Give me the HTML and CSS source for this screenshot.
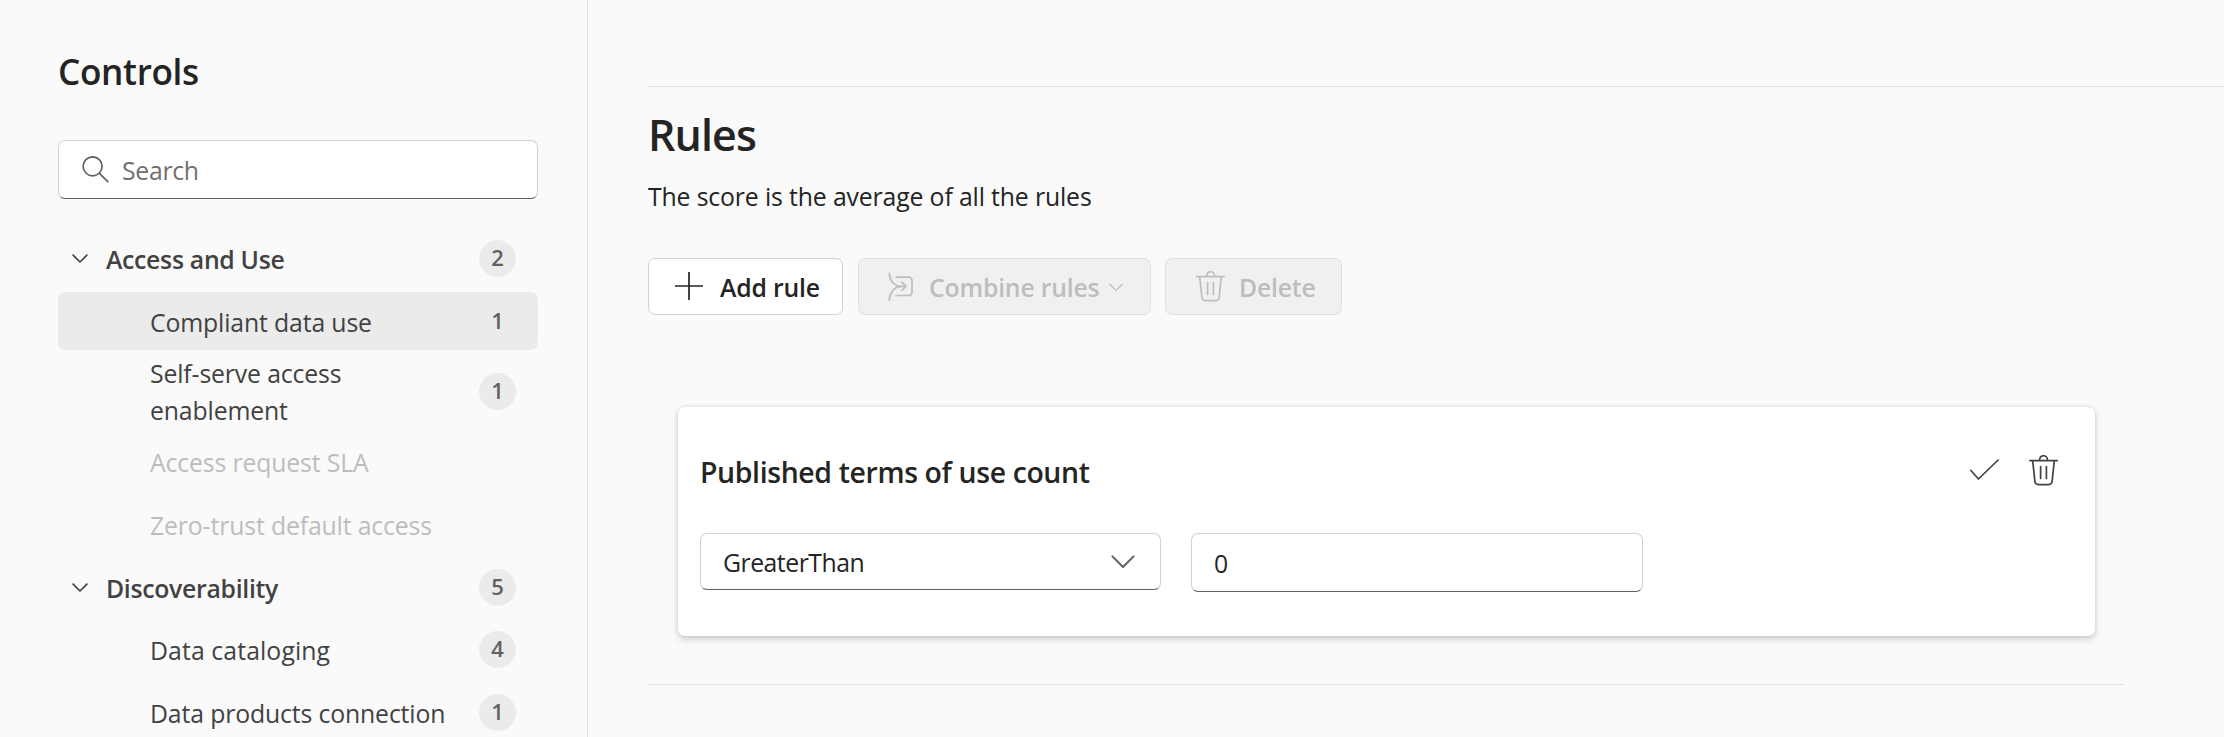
FILE: index.html
```html
<!DOCTYPE html>
<html lang="en">
<head>
<meta charset="utf-8">
<title>Controls - Rules</title>
<link rel="stylesheet" href="styles.css">
</head>
<body>
<svg class="defs" width="0" height="0" aria-hidden="true">
  <symbol id="trash" viewBox="0 0 29 31">
    <path d="M.8 5.6H28.2M10.6 5.4V4.6a3.9 3.9 0 0 1 7.8 0v.8M3.7 5.8 5.9 26.3a3.5 3.5 0 0 0 3.5 3.3h10.2a3.5 3.5 0 0 0 3.5-3.3L25.3 5.8M11.6 11.6V23.4M17.4 11.6V23.4"/>
  </symbol>
  <symbol id="chevron" viewBox="0 0 16 10"><path d="M1.1 1.1 8 8 14.9 1.1"/></symbol>
</svg>
<div class="app">
  <aside class="sidebar">
    <h2 class="sidebar-title">Controls</h2>
    <label class="search">
      <svg class="icon search-icon" width="27" height="27" viewBox="0 0 27 27"><circle cx="10.6" cy="10.3" r="9.5"/><path d="M17.4 17.3 25.8 25.7"/></svg>
      <span class="search-text">Search</span>
    </label>
    <ul class="tree">
      <li class="row group"><svg class="icon row-chevron" width="16" height="10"><use href="#chevron"/></svg><span class="label">Access and Use</span><span class="badge">2</span></li>
      <li class="row item selected"><span class="label">Compliant data use</span><span class="badge">1</span></li>
      <li class="row item tall"><span class="label">Self-serve access enablement</span><span class="badge">1</span></li>
      <li class="row item disabled"><span class="label">Access request SLA</span></li>
      <li class="row item disabled"><span class="label">Zero-trust default access</span></li>
      <li class="row group"><svg class="icon row-chevron" width="16" height="10"><use href="#chevron"/></svg><span class="label">Discoverability</span><span class="badge">5</span></li>
      <li class="row item"><span class="label wide">Data cataloging</span><span class="badge">4</span></li>
      <li class="row item"><span class="label">Data products connection</span><span class="badge">1</span></li>
    </ul>
  </aside>
  <main class="main">
    <section class="rules">
      <h1 class="rules-title">Rules</h1>
      <p class="subtitle">The score is the average of all the rules</p>
      <div class="toolbar">
        <button class="btn add" type="button"><svg class="icon" width="28" height="28" viewBox="0 0 28 28"><path d="M14 .5V27.5M.5 14H27.5"/></svg><span>Add rule</span></button>
        <button class="btn combine" type="button" disabled><svg class="icon" width="28" height="29" viewBox="7 11 28 29"><path d="M9.3 12.3C9.7 19.5 14 25.2 21.5 25.3H26M9.3 39.2C9.7 32 14 25.4 21.5 25.3M21.8 21.2 26 25.3 21.8 29.5M16.2 16.2H28.7a3.3 3.3 0 0 1 3.3 3.3V31.2a3.3 3.3 0 0 1-3.3 3.3H16.2"/></svg><span>Combine rules</span><svg class="icon caret" width="14" height="9" viewBox="0 0 14 9"><path d="M.8 1.2 7 7.4 13.200 1.2"/></svg></button>
        <button class="btn delete" type="button" disabled><svg class="icon" width="29" height="31"><use href="#trash"/></svg><span>Delete</span></button>
      </div>
      <article class="card">
        <header class="card-head">
          <h3 class="card-title">Published terms of use count</h3>
          <div class="actions">
            <svg class="icon" width="29" height="31" viewBox="0 0 29 31"><path d="M.9 15.5 8.5 24 28.1 5"/></svg>
            <svg class="icon" width="29" height="31"><use href="#trash"/></svg>
          </div>
        </header>
        <div class="fields">
          <div class="field select"><span class="operator">GreaterThan</span><svg class="icon" width="24" height="14" viewBox="0 0 24 14"><path d="M1.4 1.4 12 12 22.6 1.4"/></svg></div>
          <div class="field number"><span class="value">0</span></div>
        </div>
      </article>
      <hr class="divider">
    </section>
  </main>
</div>
</body>
</html>
```
FILE: styles.css
```css
* { box-sizing: border-box; }

body {
  margin: 0;
  background: #fafafa;
  color: #242424;
  font: 400 24.8px/37px "Open Sans", "Noto Sans", sans-serif;
  letter-spacing: -0.14px;
  overflow: hidden;
}

h1, h2, h3, p, ul { margin: 0; padding: 0; }

.defs { position: absolute; }

.icon {
  flex: none;
  fill: none;
  stroke: currentColor;
  stroke-width: 1.7;
  stroke-linecap: round;
  stroke-linejoin: round;
}

.app { display: flex; height: 737px; overflow: hidden; }

/* Sidebar */
.sidebar {
  flex: none;
  width: 588px;
  padding: 47px 49px 0 58px;
  border-right: 1px solid #e0e0e0;
}

.sidebar-title {
  font-size: 35.2px;
  font-weight: 600;
  line-height: 48px;
  letter-spacing: -0.35px;
}

.search {
  display: flex;
  align-items: center;
  gap: 13px;
  height: 59px;
  margin-top: 45px;
  padding-left: 23px;
  background: #fff;
  border: 1px solid #d1d1d1;
  border-bottom-color: #616161;
  border-radius: 7px;
}

.search-icon { color: #616161; }
.search-text { padding-top: 2px; color: #707070; letter-spacing: -0.3px; }

.tree {
  display: flex;
  flex-direction: column;
  gap: 4px;
  margin-top: 30px;
  list-style: none;
}

.row {
  display: flex;
  flex: none;
  align-items: center;
  height: 58.7px;
  padding-right: 22px;
  border-radius: 7px;
  color: #424242;
}

.tall { height: 74px; }
.item { padding-left: 92px; }
.group { padding-left: 14px; font-weight: 600; letter-spacing: -0.3px; }
.selected { background: #ebebeb; }
.disabled { color: #bdbdbd; }
.row-chevron { margin: 1px 18px 0 0; }
.label { flex: 1; padding-top: 2px; }
.tall .label { padding-right: 80px; }
.wide { letter-spacing: 0.1px; }

.badge {
  flex: none;
  width: 37px;
  height: 37px;
  border-radius: 50%;
  background: #ebebeb;
  color: #616161;
  font-size: 22px;
  font-weight: 600;
  line-height: 35px;
  letter-spacing: 0;
  text-align: center;
}

/* Main */
.main { flex: 1; padding: 86px 0 0 60px; }
.rules { border-top: 1px solid #e0e0e0; padding-top: 19px; }

.rules-title {
  font-size: 43px;
  font-weight: 600;
  line-height: 58px;
  letter-spacing: -0.9px;
}

.subtitle { margin-top: 14px; }

.toolbar { display: flex; margin-top: 43px; }

.btn {
  display: flex;
  align-items: center;
  height: 57px;
  padding: 0;
  background: #fff;
  border: 1px solid #d1d1d1;
  border-radius: 7px;
  color: #242424;
  font: inherit;
  font-weight: 600;
  letter-spacing: -0.2px;
}

.btn span { padding-top: 2px; }
.btn .icon { margin-bottom: 1px; }
.btn:disabled { background: #f0f0f0; border-color: #e0e0e0; color: #bdbdbd; }
.add { width: 195px; padding-left: 26px; gap: 17px; }
.combine { width: 293px; margin-left: 15px; padding-left: 28px; gap: 14px; }
.btn.combine .caret { margin: 2px 0 0 -4px; stroke-width: 1.3; }
.delete { width: 177px; margin-left: 14px; padding-left: 30px; gap: 14px; }

.card {
  width: 1417px;
  height: 229px;
  margin: 92px 0 0 30px;
  padding: 46px 37px 0 22px;
  background: #fff;
  border-radius: 7px;
  box-shadow: 0 0 4px rgba(0, 0, 0, 0.12), 0 3.7px 7.3px rgba(0, 0, 0, 0.14);
}

.card-head { display: flex; justify-content: space-between; height: 37px; }
.card-title { padding-top: 1px; font-size: 28.4px; font-weight: 600; letter-spacing: -0.36px; }
.actions { display: flex; gap: 30px; padding-top: 2px; color: #424242; }

.fields { display: flex; align-items: flex-start; gap: 30px; margin-top: 43px; }

.field {
  display: flex;
  align-items: center;
  justify-content: space-between;
  border: 1px solid #d1d1d1;
  border-bottom-color: #616161;
  border-radius: 7px;
}

.select { width: 461px; height: 57px; padding: 0 25px 0 22px; }
.select .icon { color: #616161; stroke-width: 2; }
.operator { padding-top: 2px; letter-spacing: -0.5px; }
.value { padding-top: 1px; }
.number { width: 452px; height: 59px; padding-left: 22px; }

.divider {
  width: 1476px;
  height: 1px;
  margin: 48px 0 0;
  border: 0;
  background: #e0e0e0;
}
```
